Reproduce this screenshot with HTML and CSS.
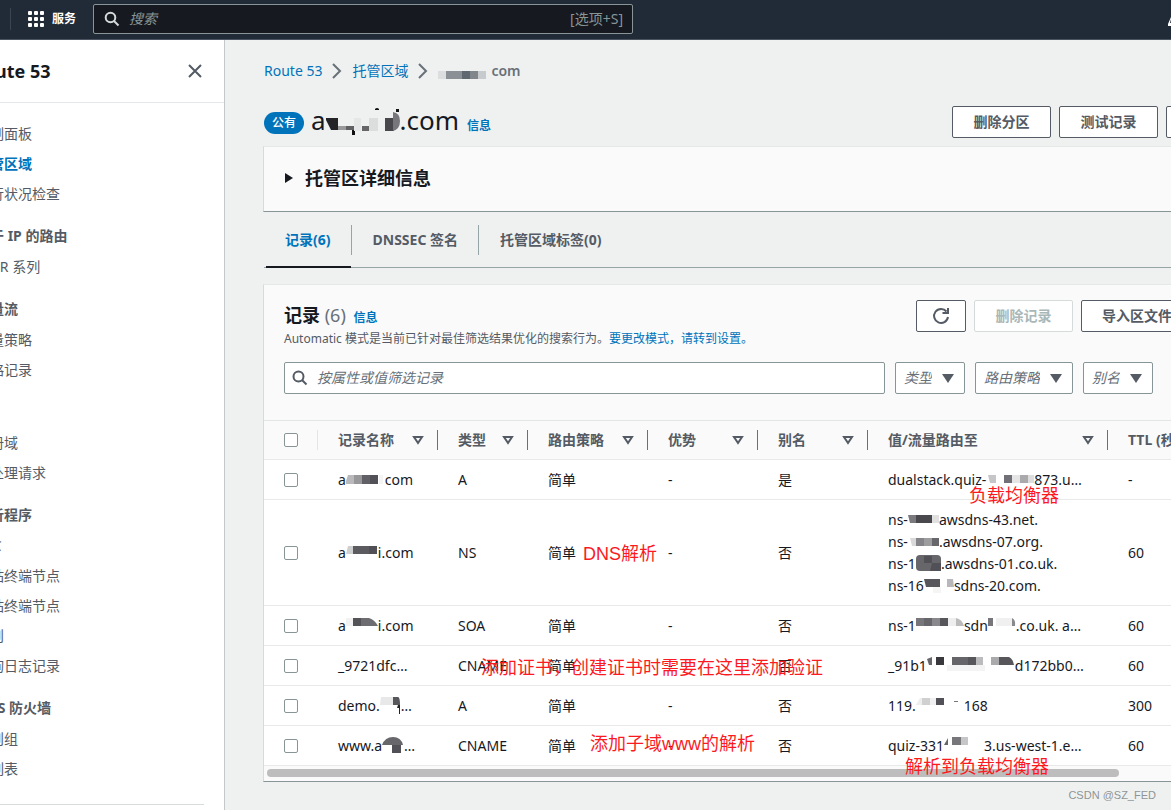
FILE: index.html
```html
<!DOCTYPE html>
<html lang="zh-CN">
<head>
<meta charset="utf-8">
<title>Route 53</title>
<link rel="stylesheet" href="styles.css">
</head>
<body>
<header class="topbar">
  <button class="services" type="button">
    <svg width="16" height="16" viewBox="0 0 16 16" fill="#fff"><rect width="4" height="4" rx="1"/><rect x="6" width="4" height="4" rx="1"/><rect x="12" width="4" height="4" rx="1"/><rect y="6" width="4" height="4" rx="1"/><rect x="6" y="6" width="4" height="4" rx="1"/><rect x="12" y="6" width="4" height="4" rx="1"/><rect y="12" width="4" height="4" rx="1"/><rect x="6" y="12" width="4" height="4" rx="1"/><rect x="12" y="12" width="4" height="4" rx="1"/></svg>
    服务
  </button>
  <label class="global-search">
    <svg width="16" height="16" viewBox="0 0 16 16" fill="none" stroke="#d5dbdb" stroke-width="2"><circle cx="6.500" cy="6.500" r="4.800"/><path d="M10 10l4.500 4.500"/></svg>
    <input type="text" placeholder="搜索" aria-label="搜索">
    <span>[选项+S]</span>
  </label>
  <svg class="bell" width="3" height="16" viewBox="0 0 3 16" fill="#fff"><path d="M3 4v2L2 10h1v3H0v-2z"/></svg>
</header>
<div class="layout">
  <nav class="sidebar" aria-label="Route 53">
    <div class="sidebar-head">
      <h2>Route 53</h2>
      <button type="button" aria-label="关闭"><svg width="14" height="14" viewBox="0 0 14 14" fill="none" stroke="#545b64" stroke-width="2"><path d="M1 1l12 12M13 1L1 13"/></svg></button>
    </div>
    <div class="sidebar-body">
      <ul>
        <li><a href="#">控制面板</a></li>
        <li><a href="#" class="current">托管区域</a></li>
        <li><a href="#">运行状况检查</a></li>
      </ul>
      <h3>基于 IP 的路由</h3>
      <ul><li><a href="#">CIDR 系列</a></li></ul>
      <h3>流量流</h3>
      <ul><li><a href="#">流量策略</a></li><li><a href="#">策略记录</a></li></ul>
      <ul class="domains"><li><a href="#">注册域</a></li><li><a href="#">待处理请求</a></li></ul>
      <h3>解析程序</h3>
      <ul>
        <li><a href="#">VPC</a></li>
        <li><a href="#">入站终端节点</a></li>
        <li><a href="#">出站终端节点</a></li>
        <li><a href="#">规则</a></li>
        <li><a href="#">查询日志记录</a></li>
      </ul>
      <h3>DNS 防火墙</h3>
      <ul><li><a href="#">规则组</a></li><li><a href="#">域列表</a></li></ul>
      <hr>
    </div>
  </nav>
  <main class="main">
    <div class="content">
      <nav class="crumbs" aria-label="导航">
        <a href="#">Route 53</a>
        <svg width="10" height="16" viewBox="0 0 10 16" fill="none" stroke="#687078" stroke-width="2"><path d="M1 1l7 7-7 7"/></svg>
        <a href="#">托管区域</a>
        <svg width="10" height="16" viewBox="0 0 10 16" fill="none" stroke="#687078" stroke-width="2"><path d="M1 1l7 7-7 7"/></svg>
        <span class="here"><svg width="53" height="22"><path fill="#dbddde" d="M0 11h8v8H0z"/><path fill="#8a9095" d="M8 11h16v8H8z"/><path fill="#5f6770" d="M24 11h8v8h-8z"/><path fill="#80868c" d="M32 11h8v8h-8z"/><path fill="#c8cbce" d="M40 11h8v8h-8z"/></svg>com</span>
      </nav>
      <div class="page-head">
        <span class="badge">公有</span>
        <h1>a<svg width="74" height="36"><path fill="#242428" d="M-1 16h13v12H5z"/><path fill="#999" d="M12 24h8v4h-8z"/><path fill="#616164" d="M20 24h8v4h-8z"/><path fill="#111" d="M26 28h3v5h-3zM49 7q2-2 4 0v1h-4zM70 7h3v3h-3z"/><path fill="#e5e6e6" d="M28 16h7v13h-7z"/><path fill="#666669" d="M36 24h7v5h-7z"/><path fill="#dcdddd" d="M43 16h9v13h-9z"/><path fill="#47474c" d="M59 16h9v13h-9z"/><path fill="#77777b" d="M67 10q7 1 7 9t-7 10z"/></svg>.com</h1>
        <a class="info" href="#">信息</a>
        <div class="actions">
          <button class="btn" type="button">删除分区</button>
          <button class="btn" type="button">测试记录</button>
          <button class="btn btn-long" type="button">配置查询日志记录</button>
        </div>
      </div>
      <section class="panel details">
        <button type="button"><svg width="9" height="10" viewBox="0 0 9 10" fill="#16191f"><path d="M1 0l8 5-8 5z"/></svg>托管区详细信息</button>
      </section>
      <div class="tabs" role="tablist">
        <button type="button" role="tab" aria-selected="true">记录(6)</button>
        <button type="button" role="tab">DNSSEC 签名</button>
        <button type="button" role="tab">托管区域标签(0)</button>
      </div>
      <section class="panel records">
        <div class="records-head">
          <div>
            <h2>记录 <span>(6)</span> <a class="info" href="#">信息</a></h2>
            <p>Automatic 模式是当前已针对最佳筛选结果优化的搜索行为。<a href="#">要更改模式，请转到设置。</a></p>
          </div>
          <div class="actions">
            <button class="btn btn-icon" type="button" aria-label="刷新"><svg width="18" height="18" viewBox="0 0 18 18" fill="none" stroke="#545b64" stroke-width="2"><path d="M16 10a7 7 0 1 1-1.500-5.500M16 1v5h-5.500"/></svg></button>
            <button class="btn" type="button" disabled>删除记录</button>
            <button class="btn" type="button">导入区文件</button>
          </div>
        </div>
        <div class="filters">
          <label class="filter-search">
            <svg width="16" height="16" viewBox="0 0 16 16" fill="none" stroke="#545b64" stroke-width="2"><circle cx="6.500" cy="6.500" r="5"/><path d="M10 10l4.500 4.500"/></svg>
            <input type="text" placeholder="按属性或值筛选记录" aria-label="筛选记录">
          </label>
          <label class="pick"><select aria-label="类型"><option>类型</option></select><svg width="12" height="9"><path d="M0 0h12L6 9z"/></svg></label>
          <label class="pick"><select aria-label="路由策略"><option>路由策略</option></select><svg width="12" height="9"><path d="M0 0h12L6 9z"/></svg></label>
          <label class="pick"><select aria-label="别名"><option>别名</option></select><svg width="12" height="9"><path d="M0 0h12L6 9z"/></svg></label>
        </div>
        <table>
          <colgroup><col class="c-check"><col class="c-name"><col class="c-type"><col class="c-policy"><col class="c-mid"><col class="c-mid"><col class="c-value"><col></colgroup>
          <thead>
            <tr>
              <th><input type="checkbox" aria-label="全选"></th>
              <th><div>记录名称<svg width="12" height="10"><path d="M2 2h8L6 8z"/></svg></div></th>
              <th><div>类型<svg width="12" height="10"><path d="M2 2h8L6 8z"/></svg></div></th>
              <th><div>路由策略<svg width="12" height="10"><path d="M2 2h8L6 8z"/></svg></div></th>
              <th><div>优势<svg width="12" height="10"><path d="M2 2h8L6 8z"/></svg></div></th>
              <th><div>别名<svg width="12" height="10"><path d="M2 2h8L6 8z"/></svg></div></th>
              <th><div>值/流量路由至<svg width="12" height="10"><path d="M2 2h8L6 8z"/></svg></div></th>
              <th><div>TTL (秒)</div></th>
            </tr>
          </thead>
          <tbody>
            <tr>
              <td><input type="checkbox" aria-label="选择"></td>
              <td>a<svg width="39" height="22"><path fill="#b9b9bb" d="M2 6h6v9H-1z"/><path fill="#98989a" d="M8 6h8v9H8z"/><path fill="#606066" d="M16 6h8v9h-8z"/><path fill="#515157" d="M24 6h8v9h-8z"/><path fill="#f4f4f5" d="M33 6h4v9h-4z"/></svg>com</td>
              <td>A</td><td>简单</td><td>-</td><td>是</td>
              <td>dualstack.quiz-<svg width="48" height="22"><path fill="#c6c6c8" d="M2 6h8v8H4z"/><path fill="#707076" d="M18 6h8v8h-8z"/><path fill="#e5e5e6" d="M26 6h8v8h-8z"/><path fill="#aaaaad" d="M34 6h8v8h-8z"/><path fill="#ddd" d="M42 6h6v8h-6z"/></svg>873.u…</td>
              <td>-</td>
            </tr>
            <tr>
              <td><input type="checkbox" aria-label="选择"></td>
              <td>a<svg width="32" height="22"><path fill="#cfcfd0" d="M2 4h5v8H0z"/><path fill="#5b5b60" d="M7 4h16v8H7z"/><path fill="#505056" d="M23 4h8v8h-8z"/></svg>i.com</td>
              <td>NS</td><td>简单</td><td>-</td><td>否</td>
              <td>
                <div>ns-<svg width="31" height="22"><path fill="#79797e" d="M0 6h8v8H2z"/><path fill="#48484d" d="M8 6h16v8H8z"/><path fill="#e0e0e1" d="M24 6h7v8h-7z"/></svg>awsdns-43.net.</div>
                <div>ns-<svg width="31" height="22"><path fill="#d9d9da" d="M2 7h6v8H4z"/><path fill="#858589" d="M8 7h8v8H8z"/><path fill="#9d9da0" d="M16 7h8v8h-8z"/><path fill="#66666b" d="M24 7h7v8h-7z"/></svg>.awsdns-07.org.</div>
                <div>ns-1<svg width="25" height="22"><rect y="2" width="25" height="16" rx="4" fill="#66666b"/><path fill="#505056" d="M8 3h8v7H8zM16 10h9v8H14z"/></svg>.awsdns-01.co.uk.</div>
                <div>ns-16<svg width="30" height="22"><path fill="#56565b" d="M0 4h16v8H2z"/><path fill="#f5f5f5" d="M9 12h8v6H9z"/><path fill="#b8b8ba" d="M23 4h6l1 8h-7z"/></svg>sdns-20.com.</div>
              </td>
              <td>60</td>
            </tr>
            <tr>
              <td><input type="checkbox" aria-label="选择"></td>
              <td>a<svg width="32" height="22"><path fill="#f2f2f3" d="M-1 3h8v8h-8z"/><path fill="#535358" d="M7 3h8v8H7z"/><path fill="#6c6c71" d="M15 3h8q6 2 9 8H15z"/></svg>i.com</td>
              <td>SOA</td><td>简单</td><td>-</td><td>否</td>
              <td>ns-1<svg width="48" height="22"><path fill="#77777b" d="M0 3h8v8H0z"/><path fill="#66666b" d="M8 3h8v8H8z"/><path fill="#89898d" d="M16 3h8v8h-8z"/><path fill="#56565b" d="M24 3h8v8h-8z"/><path fill="#eee" d="M32 3h8v8h-8z"/><path fill="#bbb" d="M40 3q6 1 8 8h-8z"/></svg>sdn<svg width="28" height="22"><path fill="#77777b" d="M0 3h5v8H0z"/><path fill="#f0f0f1" d="M8 3h16v8H8z"/><path fill="#89898d" d="M24 3q4 2 3 8h-3z"/></svg>.co.uk. a…</td>
              <td>60</td>
            </tr>
            <tr>
              <td><input type="checkbox" aria-label="选择"></td>
              <td>_9721dfc…</td>
              <td>CNAME</td><td>简单</td><td>-</td><td>否</td>
              <td>_91b1<svg width="88" height="22"><path fill="#66666b" d="M0 4l5-2v8H2z"/><path fill="#38383d" d="M9 2h8v8H9z"/><path fill="#65656a" d="M25 2h16v8H25z"/><path fill="#56565b" d="M41 2h8v8h-8z"/><path fill="#bbbbbd" d="M49 2h7v8h-7z"/><path fill="#f4f4f5" d="M20 10h38v6H20z"/><path fill="#aaaaad" d="M64 2h8v8h-8z"/><path fill="#56565b" d="M72 2h10q4 2 5 8H72z"/></svg>d172bb0…</td>
              <td>60</td>
            </tr>
            <tr>
              <td><input type="checkbox" aria-label="选择"></td>
              <td>demo.<svg width="21" height="22"><path fill="#e8e8e9" d="M1 2h12v8H0z"/><path fill="#56565b" d="M13 2h5q2 0 2 8h-7z"/><path fill="#222" d="M18 10h2v9h-1v-6h-2z"/></svg>…</td>
              <td>A</td><td>简单</td><td>-</td><td>否</td>
              <td>119.<svg width="48" height="22"><path fill="#eee" d="M0 10l4-7h2v7z"/><path fill="#d0d0d1" d="M6 3h8v7H6z"/><path fill="#f0f0f1" d="M14 3h6v7h-6z"/><path fill="#515157" d="M20 3h8v7h-8z"/><path fill="#777" d="M38 6h4v1h-4z"/></svg>168</td>
              <td>300</td>
            </tr>
            <tr>
              <td><input type="checkbox" aria-label="选择"></td>
              <td>www.a<svg width="22" height="22"><path fill="#66666b" d="M0 10q3-8 11-8t10 8z"/><path fill="#505056" d="M10 10h9v8h-9z"/></svg>…</td>
              <td>CNAME</td><td>简单</td><td>-</td><td>否</td>
              <td>quiz-331<svg width="40" height="22"><path fill="#66666b" d="M4 3v7H0z"/><path fill="#77777b" d="M8 2h9v8H8z"/><path fill="#c6c6c8" d="M17 2h7v8h-7z"/></svg>3.us-west-1.e…</td>
              <td>60</td>
            </tr>
          </tbody>
        </table>
        <div class="scroller"><div></div></div>
        <span class="note note-lb">负载均衡器</span>
        <span class="note note-dns">DNS解析</span>
        <span class="note note-cert">添加证书，创建证书时需要在这里添加验证</span>
        <span class="note note-www">添加子域www的解析</span>
        <span class="note note-to-lb">解析到负载均衡器</span>
      </section>
    </div>
  </main>
</div>
<span class="watermark">CSDN @SZ_FED</span>
</body>
</html>
```
FILE: styles.css
```css
* { box-sizing: border-box; }
body {
  margin: 0;
  height: 100vh;
  display: flex;
  flex-direction: column;
  position: relative;
  overflow: hidden;
  background: #eff1f1;
  color: #16191f;
  font: 14px/22px "Noto Sans", "Noto Sans CJK SC", sans-serif;
}
button, input, select { font: inherit; color: inherit; margin: 0; }
button { border: 0; background: none; padding: 0; white-space: nowrap; }
a { color: #0073bb; text-decoration: none; }
h1, h2, h3, p, ul { margin: 0; padding: 0; }
ul { list-style: none; }
svg { flex: none; }

.topbar {
  height: 40px;
  flex: none;
  display: flex;
  align-items: center;
  padding: 0 0 2px 10px;
  background: #212b37;
  border-bottom: 1px solid #4a535f;
}
.services {
  display: flex;
  align-items: center;
  gap: 8px;
  height: 22px;
  padding: 0 17px;
  border-left: 1px solid #3b444f;
  color: #fff;
  font-size: 12px;
  font-weight: 700;
}
.global-search {
  width: 540px;
  height: 30px;
  margin-top: 1px;
  display: flex;
  align-items: center;
  gap: 9px;
  padding: 0 9px 0 10px;
  border: 1px solid #879596;
  border-radius: 2px;
  background: #16191f;
  color: #879596;
}
.global-search input, .filter-search input {
  flex: 1;
  min-width: 0;
  border: 0;
  padding: 0;
  background: none;
  outline: 0;
}
input::placeholder { color: #879596; font-style: italic; opacity: 1; }
.bell { margin-left: auto; margin-top: 4px; }

.layout { flex: 1; min-height: 0; display: flex; }
.sidebar {
  width: 225px;
  flex: none;
  overflow: hidden;
  background: #fff;
  border-right: 1px solid #c4c8c8;
}
.sidebar-head {
  height: 63px;
  display: flex;
  align-items: center;
  justify-content: space-between;
  padding-right: 22px;
  border-bottom: 1px solid #e5e7e8;
}
.sidebar-head h2 { margin-left: -28px; font-size: 18px; }
.sidebar-head button { display: flex; }
.sidebar-body { margin-left: -24px; padding: 20px 20px 0 0; }
.sidebar-body a { color: #545b64; }
.sidebar-body a.current { color: #0073bb; font-weight: 700; }
.sidebar-body li { height: 30px; }
.sidebar-body h3 {
  margin-top: 12px;
  height: 31px;
  color: #545b64;
  font-size: 14px;
}
.domains { margin-top: 43px; }
.sidebar-body hr { margin: 16px 0 0; border: 0; border-top: 1px solid #d9dcdd; }

.main { flex: 1; min-width: 0; overflow: hidden; padding-left: 38px; }
.content { margin-right: -151px; padding-top: 20px; }
.crumbs { display: flex; align-items: center; gap: 10px; padding-left: 1px; }
.here { display: flex; color: #687078; font-weight: 600; }
.page-head { display: flex; align-items: center; padding: 21px 0 6px 1px; height: 64px; }
.badge {
  margin-top: 2px;
  padding: 0 8px;
  border-radius: 11px;
  background: #0073bb;
  color: #fff;
  font-size: 12px;
  font-weight: 500;
}
h1 {
  display: flex;
  margin: 0 8px 4px 7px;
  font-size: 26px;
  font-weight: 400;
  line-height: 36px;
}
.info { font-size: 12px; font-weight: 700; }
.page-head .info { margin-top: 8px; }
.actions { display: flex; gap: 8px; margin-left: auto; }
.btn {
  min-width: 99px;
  height: 32px;
  padding: 0 20px;
  border: 1px solid #545b64;
  border-radius: 2px;
  background: #fff;
  color: #545b64;
  font-weight: 700;
}
.btn:disabled { border-color: #d5dbdb; color: #aab7b8; }
.btn-long { min-width: 156px; }
.btn-icon { min-width: 50px; padding: 0 15px; display: flex; align-items: center; }

.panel {
  background: #fafafa;
  border: 1px solid #d5dbdb;
  border-top-color: #e5e8e8;
  border-bottom-color: #879596;
}
.details { padding: 20px; height: 66px; }
.details button { display: flex; align-items: center; gap: 12px; font-size: 18px; font-weight: 700; }
.tabs { display: flex; align-items: center; height: 56px; margin: 0 0 16px 1px; border-bottom: 1px solid #95a5a6; }
.tabs button {
  height: 30px;
  padding: 0 20px 0 21px;
  border-right: 1px solid #95a5a6;
  color: #545b64;
  font-weight: 700;
}
.tabs button:last-child { border: 0; }
.tabs [aria-selected] { position: relative; color: #0073bb; }
.tabs [aria-selected]::after {
  content: "";
  position: absolute;
  left: 2px;
  right: 0;
  bottom: -13px;
  height: 2px;
  background: #16191f;
}

.records { position: relative; }
.records-head { display: flex; padding: 15px 128px 0 20px; }
.records-head h2 { padding-top: 1px; font-size: 18px; line-height: 28px; }
.records-head h2 span { color: #687078; font-weight: 400; }
.records-head h2 .info { margin-left: 3px; }
.records-head p { color: #545b64; font-size: 12px; line-height: 14px; }
.filters { display: flex; gap: 10px; padding: 16px 168px 26px 20px; }
.filter-search {
  flex: 1;
  height: 32px;
  display: flex;
  align-items: center;
  gap: 9px;
  padding: 0 7px;
  border: 1px solid #879596;
  border-radius: 2px;
  background: #fff;
}
.filter-search input::placeholder { color: #687078; }
.pick { position: relative; display: flex; }
.pick select {
  appearance: none;
  height: 32px;
  padding: 0 32px 0 8px;
  border: 1px solid #879596;
  border-radius: 2px;
  background: #fff;
  color: #687078;
  font-style: italic;
}
.pick svg { position: absolute; right: 11px; top: 12px; fill: #545b64; pointer-events: none; }

table { width: 100%; table-layout: fixed; border-collapse: separate; border-spacing: 0; }
.c-check { width: 54px; }
.c-name, .c-policy { width: 120px; }
.c-type { width: 90px; }
.c-mid { width: 110px; }
.c-value { width: 240px; }
th, td {
  height: 40px;
  padding: 9px 0 8px 20px;
  border-bottom: 1px solid #e8eaea;
  text-align: left;
  white-space: nowrap;
}
th { padding: 9px 0 9px 0; border-top: 1px solid #e3e6e6; color: #545b64; }
th:first-child { padding-left: 20px; }
th > div {
  height: 20px;
  display: flex;
  align-items: center;
  justify-content: space-between;
  padding: 0 13px 0 20px;
  border-right: 1px solid #687078;
}
th:first-child { background: linear-gradient(#e3e6e6, #e3e6e6) right center / 1px 20px no-repeat; }
th:last-child > div { border: 0; }
th svg { fill: none; stroke: #545b64; stroke-width: 2; }
tbody { background: #fff; }
td svg { height: 22px; vertical-align: top; }
td:last-child { padding-right: 20px; }
input[type="checkbox"] {
  appearance: none;
  display: block;
  width: 14px;
  height: 14px;
  border: 1px solid #879596;
  border-radius: 2px;
  background: #fff;
}
.scroller { height: 15px; padding: 3px 202px 0 3px; }
.scroller div { height: 8px; border-radius: 4px; background: #bdbdbd; }

.note {
  position: absolute;
  color: #fb1a1f;
  font: 18px/24px "Liberation Sans", "Noto Sans CJK SC", sans-serif;
  white-space: nowrap;
}
.note-lb { left: 705px; top: 199px; }
.note-dns { left: 319px; top: 257px; }
.note-cert { left: 217px; top: 371px; }
.note-www { left: 326px; top: 447px; }
.note-to-lb { left: 641px; top: 470px; }
.watermark {
  position: absolute;
  right: 15px;
  bottom: 7px;
  color: #8f9496;
  font: 11px/16px "Liberation Sans", sans-serif;
}
```
